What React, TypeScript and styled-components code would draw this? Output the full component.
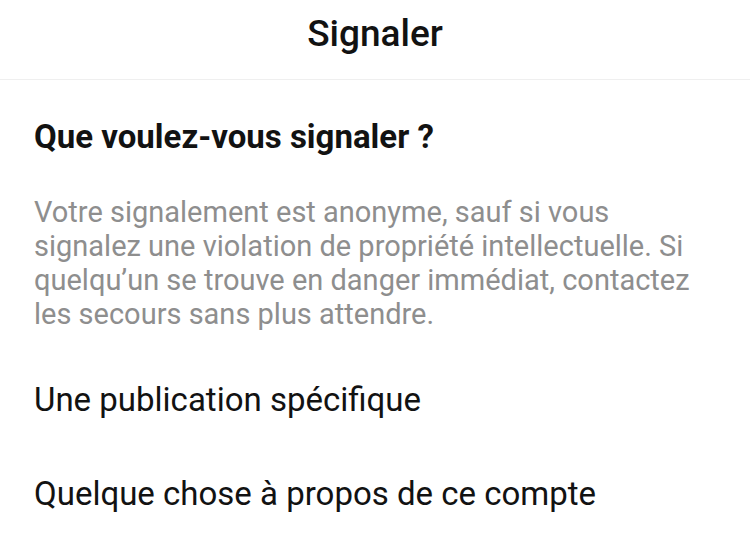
import React from "react";
import styled, { createGlobalStyle } from "styled-components";

const Global = createGlobalStyle`
  html, body {
    margin: 0;
    padding: 0;
    background: #ffffff;
  }
  body {
    font-family: Roboto, "Noto Sans", Arial, sans-serif;
    -webkit-font-smoothing: antialiased;
  }
`;

const Sheet = styled.div`
  width: 750px;
  height: 546px;
  overflow: hidden;
  background: #ffffff;
  display: flex;
  flex-direction: column;
`;

const Header = styled.header`
  height: 80px;
  box-sizing: border-box;
  padding-top: 15px;
  display: flex;
  justify-content: center;
  border-bottom: 1px solid #efefef;
`;

const Title = styled.h1`
  margin: 0;
  font-size: 37px;
  line-height: 37px;
  font-weight: 500;
  color: #121212;
`;

const Body = styled.section`
  padding: 0 34px;
  display: flex;
  flex-direction: column;
`;

const Question = styled.h2`
  margin: 40px 0 0;
  font-size: 33px;
  line-height: 33px;
  font-weight: 700;
  color: #121212;
`;

const Notice = styled.p`
  margin: 42px 0 0;
  max-width: 665px;
  font-size: 29px;
  line-height: 34px;
  font-weight: 400;
  color: #8e8e8e;
`;

const OptionList = styled.ul`
  list-style: none;
  margin: 21px 0 0;
  padding: 0;
`;

const Option = styled.li`
  height: 94px;
  display: flex;
  align-items: center;
  font-size: 33px;
  color: #121212;
`;

const options = [
  "Une publication spécifique",
  "Quelque chose à propos de ce compte",
];

export default function App() {
  return (
    <>
      <Global />
      <Sheet>
        <Header>
          <Title>Signaler</Title>
        </Header>
        <Body>
          <Question>Que voulez-vous signaler ?</Question>
          <Notice>
            Votre signalement est anonyme, sauf si vous signalez une violation
            de propriété intellectuelle. Si quelqu’un se trouve en danger
            immédiat, contactez les secours sans plus attendre.
          </Notice>
          <OptionList>
            {options.map((o) => (
              <Option key={o}>{o}</Option>
            ))}
          </OptionList>
        </Body>
      </Sheet>
    </>
  );
}
